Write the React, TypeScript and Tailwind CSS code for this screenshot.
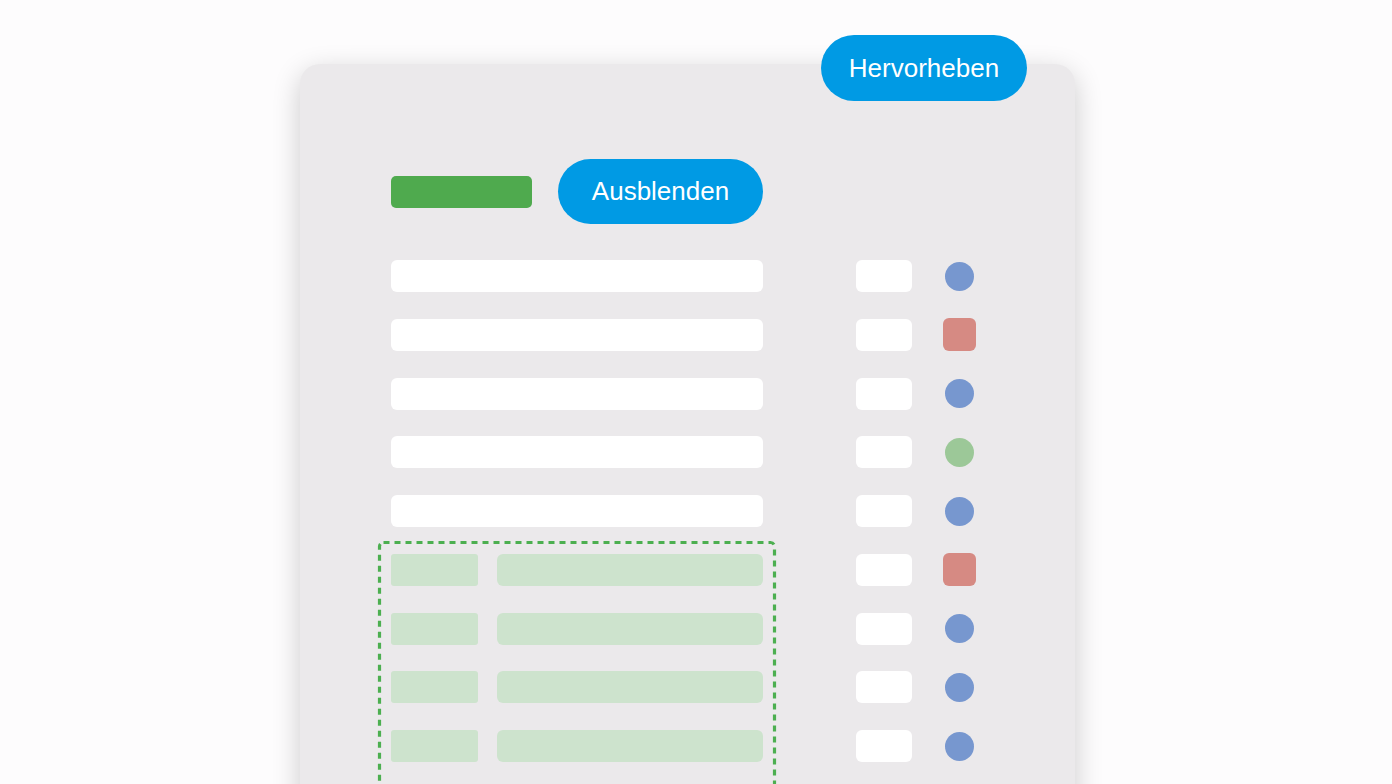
const markers: ("blue" | "red" | "green")[] = ["blue", "red", "blue", "green", "blue", "red", "blue", "blue", "blue"];

function Marker({ kind }: { kind: "blue" | "red" | "green" }) {
  if (kind === "red") {
    return <div className="h-[33px] w-[33px] rounded-[6px] bg-[#d68a83]" />;
  }
  return (
    <div
      className={
        kind === "green"
          ? "h-[29px] w-[29px] rounded-full bg-[#9cc898]"
          : "h-[29px] w-[29px] rounded-full bg-[#7797cf]"
      }
    />
  );
}

function GreenRow() {
  return (
    <div className="flex h-8 gap-[19px]">
      <div className="w-[87px] rounded-[3px] bg-[#cde3cd]" />
      <div className="flex-1 rounded-[6px] bg-[#cde3cd]" />
    </div>
  );
}

export default function App() {
  return (
    <div className="h-screen overflow-hidden bg-[#fdfcfd] font-['Liberation_Sans',Arial,sans-serif]">
      <div className="relative ml-[300px] mt-[64px] h-[780px] w-[775px] rounded-[20px] bg-[#ebe9eb] shadow-[0_8px_28px_rgba(0,0,0,0.2)]">
        <button className="absolute -top-[29px] right-[48px] flex h-[66px] w-[206px] items-center justify-center rounded-full bg-[#009ae4] text-[26px] text-white">
          Hervorheben
        </button>

        <div className="pl-[91px] pt-[95px]">
          <div className="flex items-center gap-[26px]">
            <div className="h-8 w-[141px] rounded-[5px] bg-[#4faa4e]" />
            <button className="flex h-[65px] w-[205px] items-center justify-center rounded-full bg-[#009ae4] text-[26px] text-white">
              Ausblenden
            </button>
          </div>

          <div className="mt-[36px] flex">
            <div className="flex w-[372px] flex-col gap-[26.75px]">
              {[0, 1, 2, 3, 4].map((i) => (
                <div key={i} className="h-8 rounded-[6px] bg-white" />
              ))}
              <div className="relative -mx-[13px] -mt-[13px] px-[13px] pt-[13px] pb-[40px]">
                <svg className="absolute inset-0 h-full w-full overflow-visible">
                  <rect
                    x="1.5"
                    y="1.5"
                    width="395"
                    height="400"
                    rx="4"
                    fill="none"
                    stroke="#4caf50"
                    strokeWidth="3.2"
                    strokeDasharray="6 5"
                  />
                </svg>
                <div className="relative flex flex-col gap-[26.75px]">
                  <GreenRow />
                  <GreenRow />
                  <GreenRow />
                  <GreenRow />
                </div>
              </div>
            </div>

            <div className="ml-[93px] flex flex-col gap-[26.75px]">
              {markers.map((m, i) => (
                <div key={i} className="flex h-8 items-center">
                  <div className="h-8 w-14 rounded-[6px] bg-white" />
                  <div className="ml-[31px] flex w-[33px] justify-center">
                    <Marker kind={m} />
                  </div>
                </div>
              ))}
            </div>
          </div>
        </div>
      </div>
    </div>
  );
}
